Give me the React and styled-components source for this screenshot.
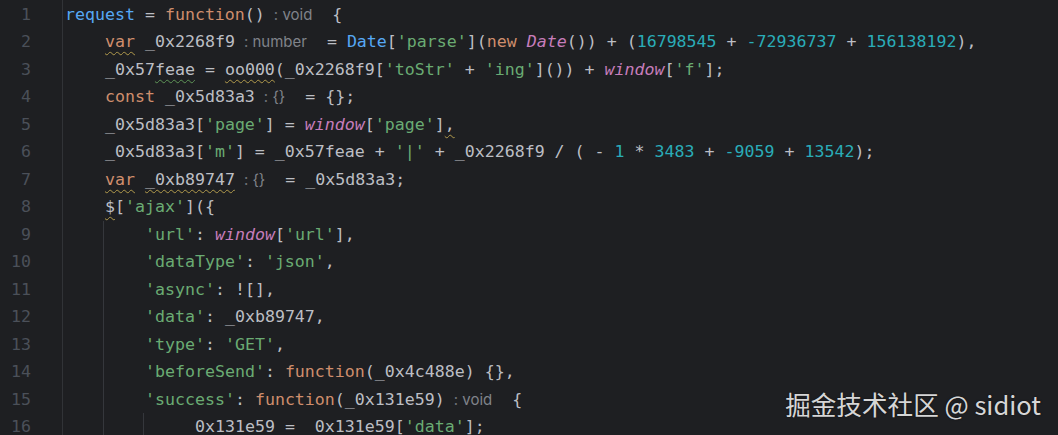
import styled, { createGlobalStyle } from "styled-components";

const GlobalStyle = createGlobalStyle`
  html, body {
    margin: 0;
    padding: 0;
    background: #1e1f22;
    height: 435px;
    overflow: hidden;
  }
`;

const LINE_H = "27.47px";

const colors = {
  text: "#bcbec4",
  kw: "#cf8e6d",
  str: "#6aab73",
  num: "#2aacb8",
  fn: "#56a8f5",
  glob: "#c77dbb",
};

function Editor({ children }) {
  const lines = Array.isArray(children) ? children : [children];
  return (
    <Frame>
      <Gutter>
        {lines.map((_, i) => (
          <LineNo key={i}>{i + 1}</LineNo>
        ))}
      </Gutter>
      <Code>{children}</Code>
      <Watermark>掘金技术社区 @ sidiot</Watermark>
    </Frame>
  );
}

function Line({ indent = 0, guides = 0, children }) {
  return (
    <Row>
      {Array.from({ length: indent }).map((_, i) => (
        <Indent key={i} $guide={i > 0 && i <= guides} />
      ))}
      {children}
    </Row>
  );
}

function Hint({ children }) {
  return (
    <HintBox>
      <span>:</span> {children}
    </HintBox>
  );
}

export default function App() {
  return (
    <>
      <GlobalStyle />
      <Editor>
        <Line>
          <Tok $c="fn">request</Tok> = <Tok $c="kw">function</Tok>()
          <Hint>void</Hint> {"{"}
        </Line>
        <Line indent={1}>
          <Warn><Tok $c="kw">var</Tok></Warn> _0x2268f9
          <Hint>number</Hint> = <Tok $c="fn">Date</Tok>[<Tok $c="str">'parse'</Tok>](
          <Tok $c="kw">new</Tok> <Tok $c="glob">Date</Tok>()) + (<Tok $c="num">16798545</Tok> +{" "}
          <Tok $c="num">-72936737</Tok> + <Tok $c="num">156138192</Tok>),
        </Line>
        <Line indent={1}>
          _0x57<Typo>feae</Typo> = <Warn>oo000</Warn>(_0x2268f9[<Tok $c="str">'toStr'</Tok> +{" "}
          <Tok $c="str">'ing'</Tok>]()) + <Tok $c="glob">window</Tok>[<Tok $c="str">'f'</Tok>];
        </Line>
        <Line indent={1}>
          <Tok $c="kw">const</Tok> _0x5d83a3
          <Hint>{"{}"}</Hint> = {"{};"}
        </Line>
        <Line indent={1}>
          _0x5d83a3[<Tok $c="str">'page'</Tok>] = <Tok $c="glob">window</Tok>[
          <Tok $c="str">'page'</Tok>]<Warn>,</Warn>
        </Line>
        <Line indent={1}>
          _0x5d83a3[<Tok $c="str">'m'</Tok>] = _0x57feae + <Tok $c="str">'|'</Tok> + _0x2268f9 / ( -{" "}
          <Tok $c="num">1</Tok> * <Tok $c="num">3483</Tok> + <Tok $c="num">-9059</Tok> +{" "}
          <Tok $c="num">13542</Tok>);
        </Line>
        <Line indent={1}>
          <Warn><Tok $c="kw">var</Tok></Warn> <Warn>_0xb89747</Warn>
          <Hint>{"{}"}</Hint> = _0x5d83a3;
        </Line>
        <Line indent={1}>
          <Warn>$</Warn>[<Tok $c="str">'ajax'</Tok>]{"({"}
        </Line>
        <Line indent={2} guides={1}>
          <Tok $c="str">'url'</Tok>: <Tok $c="glob">window</Tok>[<Tok $c="str">'url'</Tok>],
        </Line>
        <Line indent={2} guides={1}>
          <Tok $c="str">'dataType'</Tok>: <Tok $c="str">'json'</Tok>,
        </Line>
        <Line indent={2} guides={1}>
          <Tok $c="str">'async'</Tok>: ![],
        </Line>
        <Line indent={2} guides={1}>
          <Tok $c="str">'data'</Tok>: _0xb89747,
        </Line>
        <Line indent={2} guides={1}>
          <Tok $c="str">'type'</Tok>: <Tok $c="str">'GET'</Tok>,
        </Line>
        <Line indent={2} guides={1}>
          <Tok $c="str">'beforeSend'</Tok>: <Tok $c="kw">function</Tok>(_0x4c488e) {"{},"}
        </Line>
        <Line indent={2} guides={1}>
          <Tok $c="str">'success'</Tok>: <Tok $c="kw">function</Tok>(_0x131e59)
          <Hint>void</Hint> {"{"}
        </Line>
        <Line indent={3} guides={2}>
          _0x131e59 = _0x131e59[<Tok $c="str">'data'</Tok>];
        </Line>
      </Editor>
    </>
  );
}

const Frame = styled.div`
  position: relative;
  display: flex;
  height: 435px;
  padding-top: 1px;
  box-sizing: border-box;
  overflow: hidden;
  background: #1e1f22;
  font-family: "DejaVu Sans Mono", "Liberation Mono", monospace;
  font-size: 16.6px;
  color: ${colors.text};
`;

const Gutter = styled.div`
  width: 31px;
  margin-right: 31px;
  text-align: right;
  color: #4b5059;
  flex-shrink: 0;
`;

const LineNo = styled.div`
  height: ${LINE_H};
  line-height: ${LINE_H};
`;

const Code = styled.div`
  flex: 1;
  border-left: 1px solid #313337;
  padding-left: 2px;
  margin-top: -1px;
  padding-top: 1px;
`;

const Row = styled.div`
  height: ${LINE_H};
  line-height: ${LINE_H};
  white-space: pre;
`;

const Indent = styled.span`
  position: relative;
  display: inline-block;
  width: 40px;
  height: ${LINE_H};
  vertical-align: top;

  &::before {
    content: "";
    display: ${(p) => (p.$guide ? "block" : "none")};
    position: absolute;
    left: -2px;
    top: 0;
    bottom: 0;
    width: 1px;
    background: #35373c;
  }
`;

const Tok = styled.span`
  color: ${(p) => colors[p.$c]};
  font-style: ${(p) => (p.$c === "glob" ? "italic" : "normal")};
`;

const Warn = styled.span`
  text-decoration: underline wavy #b19a4c;
  text-decoration-thickness: 1px;
  text-underline-offset: 4px;
`;

const Typo = styled(Warn)`
  text-decoration-color: #5e9557;
`;

const HintBox = styled.span`
  display: inline-block;
  padding: 0 10px 0 9px;
  font-family: Inter, "Noto Sans", sans-serif;
  font-size: 15px;
  color: #80838a;
  white-space: pre;

  span {
    color: #6f7278;
  }
`;

const Watermark = styled.div`
  position: absolute;
  right: 17px;
  bottom: 18px;
  font-family: "Noto Sans CJK SC", "Noto Sans", sans-serif;
  font-size: 25.6px;
  line-height: 1;
  color: rgba(235, 235, 235, 0.92);
  text-shadow: 0 0 2px rgba(0, 0, 0, 0.5);
  white-space: nowrap;
`;
